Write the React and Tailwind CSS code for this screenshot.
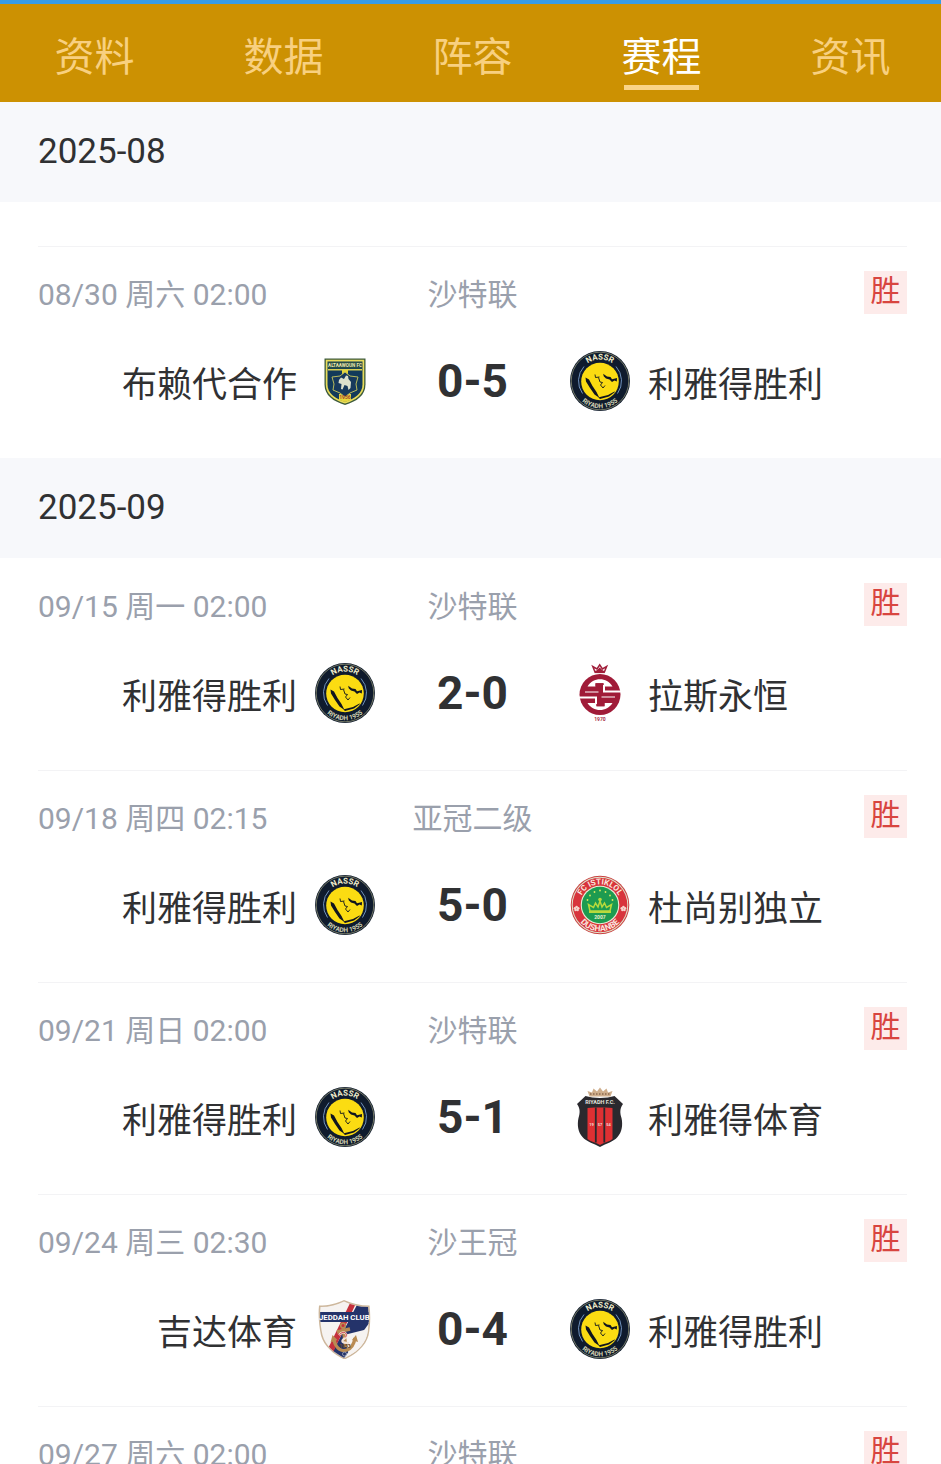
import React from "react";

const TABS = ["资料", "数据", "阵容", "赛程", "资讯"];
const LOGO = "size-[60px] shrink-0 font-['Roboto',sans-serif]";

function NassrLogo() {
  const id = React.useId();
  return (
    <svg viewBox="0 0 60 60" className={LOGO} role="img" aria-label="利雅得胜利">
      <circle cx="30" cy="30" r="30" fill="#0f1b2d" />
      <circle cx="30" cy="30" r="28.800" fill="none" stroke="#b5b58a" strokeWidth="0.6" />
      <path d="M14 15.500A21.600 21.600 0 0 0 12.500 42.500M46 15.500A21.600 21.600 0 0 1 47.500 42.500" fill="none" stroke="#6f92bd" strokeWidth="1" />
      <circle cx="30" cy="30.500" r="18.800" fill="#fbdc12" />
      <path d="M15.500 26.500l3.500 2 3.500 6.500 4 6 3 6-5-3.500-4.500-6.500-4-6.500z" fill="#10151f" />
      <path d="M28.500 46.500l1.500 1.500 9-2.500 6-4.500-.5-.6-6.500 3.600-8 2z" fill="#10151f" />
      <path d="M33.200 22.800l3.800 2.600 3.500.6 1.500 2.300 5-1.300-.2 3.600-2.300-1.100-2.500 1.500-2.500-2.600-3.500-.8-2.300-2.300z" fill="#10151f" />
      <path d="M25 23.500l.5 3 4-.5M28.500 26.500l1.500 4.500 2.500.5-2 2.500 2.500 3 2-2.500" fill="none" stroke="#10151f" strokeWidth="0.9" />
      <path id={`${id}t`} d="M8.500 30a21.500 21.500 0 0 1 43 0" fill="none" />
      <path id={`${id}b`} d="M2.800 30a27.200 27.200 0 0 0 54.400 0" fill="none" />
      <text fill="#f1efcd" fontSize="8" fontWeight="700" textAnchor="middle">
        <textPath href={`#${id}t`} startOffset="50%">NASSR</textPath>
      </text>
      <text fill="#d3d3b4" fontSize="6.5" fontWeight="700" textAnchor="middle">
        <textPath href={`#${id}b`} startOffset="50%">RIYADH 1955</textPath>
      </text>
    </svg>
  );
}

function TaawounLogo() {
  return (
    <svg viewBox="5 6 60 60" className={LOGO} role="img" aria-label="布赖代合作">
      <path d="M14.500 13.500h41v26c0 11-9 17-20.500 20.500-11.500-3.500-20.500-9.500-20.500-20.500z" fill="#3c5a3c" />
      <path d="M15.800 14.800h38.400v24.700c0 10-8.500 15.700-19.200 19-10.700-3.300-19.200-9-19.200-19z" fill="#e9dc5a" />
      <path d="M17.500 16.500h35v23c0 9-7.500 14-17.500 17.200-10-3.200-17.500-8.200-17.500-17.200z" fill="#123a5a" />
      <path d="M18 17h34v6.500H18z" fill="#274c46" />
      <text x="35" y="22.300" fill="#efe9b0" fontSize="4.600" fontWeight="700" textAnchor="middle">ALTAAWOUN FC</text>
      <path d="M18 24h34v1.500H18z" fill="#d9cf52" />
      <path d="M32 25h6v5h-6zM29 49h12v6l-6 2-6-2z" fill="#e6d63c" />
      <path d="M35 27l5 4 8 1-2 7 1 6-7 3-5 4-5-4-7-3 1-6-2-7 8-1z" fill="#17395c" stroke="#b9bb5c" strokeWidth="1" />
      <path d="M29 35l2-2.500 3 1.500 2-3.500 2 .5.500 3 2.500 3-.5 6-2 2-1-4-3-1-2 4.500-1.500-.5.500-5-3-1z" fill="#dce0cc" />
      <text x="35" y="53.500" fill="#a8452c" fontSize="5" fontWeight="700" textAnchor="middle">1956</text>
    </svg>
  );
}

function KholoodLogo() {
  return (
    <svg viewBox="5 6 60 60" className={LOGO} role="img" aria-label="拉斯永恒">
      <path d="M29.800 14.500L27.800 9.500l4.200 2.500L34.700 7.800l2.700 4.200 4.200-2.500-2 5z" fill="none" stroke="#a01e3a" strokeWidth="1.500" />
      <path d="M30.500 14.500l4.200-4 4.200 4z" fill="#a01e3a" />
      <path d="M29.500 15.500h10.400" stroke="#a01e3a" strokeWidth="1.200" />
      <circle cx="35" cy="37.500" r="20.500" fill="#a01b38" />
      <path d="M22.500 29.500c3-5 7.500-7.300 12.500-7.300s9.500 2.300 12.500 7.300H38.500v-3.300h-8v3.300z" fill="#fff" />
      <path d="M47.500 46c-3 4.700-7.500 7-12.500 7s-9.500-2.300-12.500-7h9v3.300h8V46z" fill="#fff" />
      <path d="M30.500 26.200h8v3.300h-8zM31.500 46h8v3.300h-8z" fill="#a01b38" />
      <path d="M39 28v6.500h17M31 47v-6.500H14" fill="none" stroke="#fff" strokeWidth="2" />
      <path d="M20 35h13.500M36.500 40h13.500" stroke="#fff" strokeWidth="1" />
      <text x="35" y="63.500" fill="#a83049" fontSize="5" fontWeight="700" textAnchor="middle">1970</text>
    </svg>
  );
}

function IstiklolLogo() {
  const id = React.useId();
  return (
    <svg viewBox="0 0 60 60" className={LOGO} role="img" aria-label="杜尚别独立">
      <circle cx="30" cy="30" r="29.300" fill="#c9403f" />
      <circle cx="30" cy="30" r="28.300" fill="#dfe6cf" />
      <circle cx="30" cy="30" r="27.300" fill="#d8343c" />
      <circle cx="30" cy="30" r="19.300" fill="#e8ecd6" />
      <circle cx="30" cy="30" r="18.200" fill="#1d9b50" />
      <path d="M20 36l-1.500-6.500 5 3 2-4.500 2.500 4 2-6 2 6 2.500-4 2 4.500 5-3L40 36z" fill="none" stroke="#b9d93c" strokeWidth="1.500" />
      <path d="M19 37h22" stroke="#b9d93c" strokeWidth="2" />
      <circle cx="30" cy="24.500" r="1.800" fill="#b9d93c" />
      <g fill="#dbe95c">
        <circle cx="17.500" cy="25" r="0.900" />
        <circle cx="20" cy="20.500" r="0.900" />
        <circle cx="24.500" cy="17" r="0.900" />
        <circle cx="30" cy="15.500" r="0.900" />
        <circle cx="35.500" cy="17" r="0.900" />
        <circle cx="40" cy="20.500" r="0.900" />
        <circle cx="42.500" cy="25" r="0.900" />
      </g>
      <text x="30" y="44" fill="#e9f0cf" fontSize="5" fontWeight="700" textAnchor="middle">2007</text>
      <g fill="#f6d5cd">
        <circle cx="6.600" cy="32" r="1.300" />
        <circle cx="5" cy="33.200" r="1.300" />
        <circle cx="8.200" cy="33.200" r="1.300" />
        <circle cx="5.600" cy="35" r="1.300" />
        <circle cx="7.600" cy="35" r="1.300" />
        <circle cx="53.400" cy="32" r="1.300" />
        <circle cx="51.800" cy="33.200" r="1.300" />
        <circle cx="55" cy="33.200" r="1.300" />
        <circle cx="52.400" cy="35" r="1.300" />
        <circle cx="54.400" cy="35" r="1.300" />
      </g>
      <path id={`${id}t`} d="M9.300 30a20.700 20.700 0 0 1 41.400 0" fill="none" />
      <path id={`${id}b`} d="M3.700 30a26.300 26.300 0 0 0 52.600 0" fill="none" />
      <text fill="#fae6df" fontSize="8" fontWeight="700" textAnchor="middle">
        <textPath href={`#${id}t`} startOffset="50%">FC ISTIKLOL</textPath>
      </text>
      <text fill="#fae6df" fontSize="8.500" fontWeight="700" textAnchor="middle">
        <textPath href={`#${id}b`} startOffset="50%">DUSHANBE</textPath>
      </text>
    </svg>
  );
}

function RiyadhLogo() {
  return (
    <svg viewBox="5 6 60 60" className={LOGO} role="img" aria-label="利雅得体育">
      <path d="M24.500 15.500l-2-5.500 4.500 1.500 1.500-4 3.500 3 3-4 3 4 3.500-3 1.500 4 4.500-1.500-2 5.500z" fill="#cfae8c" />
      <path d="M25 13h20" stroke="#8d6b50" strokeWidth="1.300" strokeDasharray="1.500 1.500" />
      <path d="M20.500 15c8 2.500 21 2.500 29 0l8.500 8c-3.500 5-3 9-1.500 14 1.500 7 .5 14-4 19-4 5-11 6-17.500 10-6.500-4-13.500-5-17.500-10-4.500-5-5.500-12-4-19 1.500-5 2-9-1.500-14z" fill="#2a292e" />
      <path d="M22.500 26.500h25v31.500c-3 2.500-8 3.500-12.500 6-4.500-2.500-9.500-3.500-12.500-6z" fill="#de3033" />
      <path d="M30.800 26.500v35M39.300 26.500v35" stroke="#2a292e" strokeWidth="1.800" />
      <path d="M20.500 25.500c9-2.500 20-2.500 29 0v2c-9-2.500-20-2.500-29 0z" fill="#2a292e" />
      <text x="35" y="23" fill="#e2e0dc" fontSize="5.500" fontWeight="700" textAnchor="middle">RIYADH F.C.</text>
      <g fill="#f3d9d3" fontSize="4" fontWeight="700" textAnchor="middle">
        <text x="26.500" y="45">19</text>
        <text x="35" y="45">57</text>
        <text x="43.500" y="45">54</text>
      </g>
    </svg>
  );
}

function JeddahLogo() {
  const id = React.useId();
  return (
    <svg viewBox="5 6 60 60" className={LOGO} role="img" aria-label="吉达体育">
      <clipPath id={`${id}s`}>
        <path d="M10.500 14c9 0 17-2 23.500-5.500 7 3.500 15 5.500 24 5.500 1 9 1 19-1 28-3 11-12 18-22.500 23-10-5-19-12-22-23-2-9-3-19-2-28z" />
      </clipPath>
      <path d="M9 12.500c10 0 18-2 25-5.500 7.500 3.500 16 5.500 25.500 5.500 1.200 10 1 20-1 30-3 11-13 19-24 24-10.500-5-20.500-13-23.500-24-2-10-3-20-2-30z" fill="#cdb79c" />
      <g clipPath={`url(#${id}s)`}>
        <path d="M6 6h56v62H6z" fill="#f6f3f1" />
        <path d="M50 6h12v20L32 68H18z" fill="#24336a" />
        <path d="M42 6h6L20 66h-7z" fill="#c5313d" />
        <path d="M34 42l24-6v16L40 66z" fill="#f6f3f1" />
        <path d="M6 19h56v10H6z" fill="#24336a" />
      </g>
      <text x="34.300" y="26.700" fill="#fff" fontSize="7.800" fontWeight="700" textAnchor="middle">JEDDAH CLUB</text>
      <circle cx="33" cy="32.500" r="2.300" fill="none" stroke="#b98b52" strokeWidth="1.600" />
      <path d="M33 35l3 19M27 39l13-3M24 47c2 9 8 12 13 10s7-6 8-12" fill="none" stroke="#b98b52" strokeWidth="3.400" />
      <path d="M20.500 49.500l2-7.500 5 5zM42 47l4-5 2 7z" fill="#b98b52" />
      <path d="M29 42c5-6 10 0 6 3s-4 5 4 5" fill="none" stroke="#f3e3d6" strokeWidth="2.200" />
      <path d="M29.500 41.500c5-5 9 0 5.500 3" fill="none" stroke="#c5313d" strokeWidth="1" />
      <text x="35" y="55" fill="#6d4a2a" fontSize="5" fontWeight="700" textAnchor="middle">1953</text>
      <circle cx="34.500" cy="61" r="2" fill="none" stroke="#9aa0b4" strokeWidth="0.900" />
    </svg>
  );
}

const NASSR = { name: "利雅得胜利", Logo: NassrLogo };

const MONTHS = [
  {
    month: "2025-08",
    continued: true,
    matches: [
      { date: "08/30 周六 02:00", league: "沙特联", score: "0-5", home: { name: "布赖代合作", Logo: TaawounLogo }, away: NASSR },
    ],
  },
  {
    month: "2025-09",
    matches: [
      { date: "09/15 周一 02:00", league: "沙特联", score: "2-0", home: NASSR, away: { name: "拉斯永恒", Logo: KholoodLogo } },
      { date: "09/18 周四 02:15", league: "亚冠二级", score: "5-0", home: NASSR, away: { name: "杜尚别独立", Logo: IstiklolLogo } },
      { date: "09/21 周日 02:00", league: "沙特联", score: "5-1", home: NASSR, away: { name: "利雅得体育", Logo: RiyadhLogo } },
      { date: "09/24 周三 02:30", league: "沙王冠", score: "0-4", home: { name: "吉达体育", Logo: JeddahLogo }, away: NASSR },
      { date: "09/27 周六 02:00", league: "沙特联" },
    ],
  },
];

function Match({ match, divided }) {
  const { date, league, score, home, away } = match;
  return (
    <li className={`border-t pt-6 ${divided ? "border-[#f3f3f5]" : "border-transparent"}`}>
      <div className="grid grid-cols-[1fr_auto_1fr] items-start text-[30px] leading-[48px] text-[#9aa0ac]">
        <time>{date}</time>
        <span>{league}</span>
        <span className="flex size-[43px] items-center justify-center justify-self-end bg-[#fdebea] leading-[40px] text-[#d8453f]">
          <span className="h-[43px]">胜</span>
        </span>
      </div>
      {score && (
        <div className="grid grid-cols-[1fr_315px_1fr] items-center gap-[18px] pt-8 pb-[47px] text-[35px] leading-[60px] text-[#303133]">
          <span className="h-[60px] text-right leading-[70px] whitespace-nowrap">{home.name}</span>
          <div className="flex items-center justify-between">
            <home.Logo />
            <strong className="text-[46px] font-bold">{score}</strong>
            <away.Logo />
          </div>
          <span className="h-[60px] leading-[70px] whitespace-nowrap">{away.name}</span>
        </div>
      )}
    </li>
  );
}

export default function App() {
  return (
    <div className="flex h-screen flex-col overflow-hidden bg-white font-['Roboto','Noto_Sans_CJK_SC',sans-serif]">
      <header className="shrink-0 overflow-hidden border-t-4 border-[#379ce6] bg-[#cc9102]">
        <div role="tablist" className="-mr-1 grid grid-cols-5">
          {TABS.map((tab) => {
            const active = tab === "赛程";
            return (
              <button
                key={tab}
                type="button"
                role="tab"
                aria-selected={active}
                className={`flex flex-col items-center pt-[27px] pb-3 text-[40px] leading-[54px] ${active ? "text-white" : "text-[#f8d080]"}`}
              >
                {tab}
                <span className={`h-[5px] w-[75px] ${active ? "bg-[#fad487]" : "bg-transparent"}`} />
              </button>
            );
          })}
        </div>
      </header>
      <main className="min-h-0 flex-1 overflow-y-auto [scrollbar-width:none]">
        {MONTHS.map(({ month, continued, matches }) => (
          <section key={month}>
            <h2 className="bg-[#f7f8fb] pr-[34px] pl-[38px] text-[35px] leading-[100px] text-[#303133]">{month}</h2>
            <ul className={`pr-[34px] pl-[38px] ${continued ? "pt-11" : ""}`}>
              {matches.map((match, i) => (
                <Match key={match.date} match={match} divided={continued || i > 0} />
              ))}
            </ul>
          </section>
        ))}
      </main>
    </div>
  );
}
